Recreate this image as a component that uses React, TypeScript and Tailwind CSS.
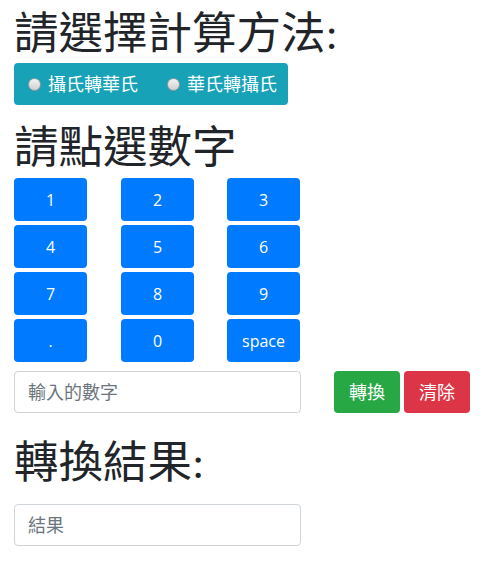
import React, { useState } from 'react';

const headingFont = { fontFamily: '"Liberation Serif", "Noto Sans CJK TC", serif' };
const bodyFont = { fontFamily: '"Open Sans", "Noto Sans CJK TC", sans-serif' };

const keys = ['1', '2', '3', '4', '5', '6', '7', '8', '9', '.', '0', 'space'];

function Radio({ label }: { label: string }) {
  return (
    <label className="flex items-center gap-[7px] text-white text-[18px]">
      <span className="w-[13px] h-[13px] rounded-full border border-[#9a9a9a] bg-gradient-to-b from-[#f4f4f4] to-[#cfcfcf]" />
      {label}
    </label>
  );
}

export default function App() {
  const [value, setValue] = useState('');

  return (
    <div className="px-[14px] pt-[8px] text-[#212529]" style={bodyFont}>
      <h1 className="pt-[5px] text-[44.5px] leading-[43px]" style={headingFont}>請選擇計算方法:</h1>
      <div className="mt-[7px] flex items-center gap-[29px] w-[274px] h-[42px] pl-[14px] rounded bg-[#17a2b8]">
        <Radio label="攝氏轉華氏" />
        <Radio label="華氏轉攝氏" />
      </div>

      <h2 className="mt-[17px] pt-[4px] text-[44.5px] leading-[44px]" style={headingFont}>請點選數字</h2>
      <div className="mt-[8px] grid grid-cols-[107px_106px_73px] gap-y-[4px] w-[287px]">
        {keys.map((k) => (
          <button
            key={k}
            onClick={() => setValue(value + (k === 'space' ? ' ' : k))}
            className="w-[73px] h-[43px] rounded bg-[#007bff] text-white text-[16px]"
          >
            {k}
          </button>
        ))}
      </div>

      <div className="mt-[9px] flex items-center">
        <input
          value={value}
          onChange={(e) => setValue(e.target.value)}
          placeholder="輸入的數字"
          className="w-[287px] h-[42px] px-[13px] border border-[#ced4da] rounded text-[18px] placeholder:text-[#6c757d] outline-none"
        />
        <button className="ml-[33px] w-[66px] h-[42px] rounded bg-[#28a745] text-white text-[18px]">轉換</button>
        <button
          onClick={() => setValue('')}
          className="ml-[4px] w-[66px] h-[42px] rounded bg-[#dc3545] text-white text-[18px]"
        >
          清除
        </button>
      </div>

      <h3 className="mt-[24px] pt-[5px] text-[44.5px] leading-[43px]" style={headingFont}>轉換結果:</h3>
      <input
        readOnly
        placeholder="結果"
        className="mt-[19px] block w-[287px] h-[42px] px-[13px] border border-[#ced4da] rounded text-[18px] placeholder:text-[#6c757d] outline-none"
      />
    </div>
  );
}
